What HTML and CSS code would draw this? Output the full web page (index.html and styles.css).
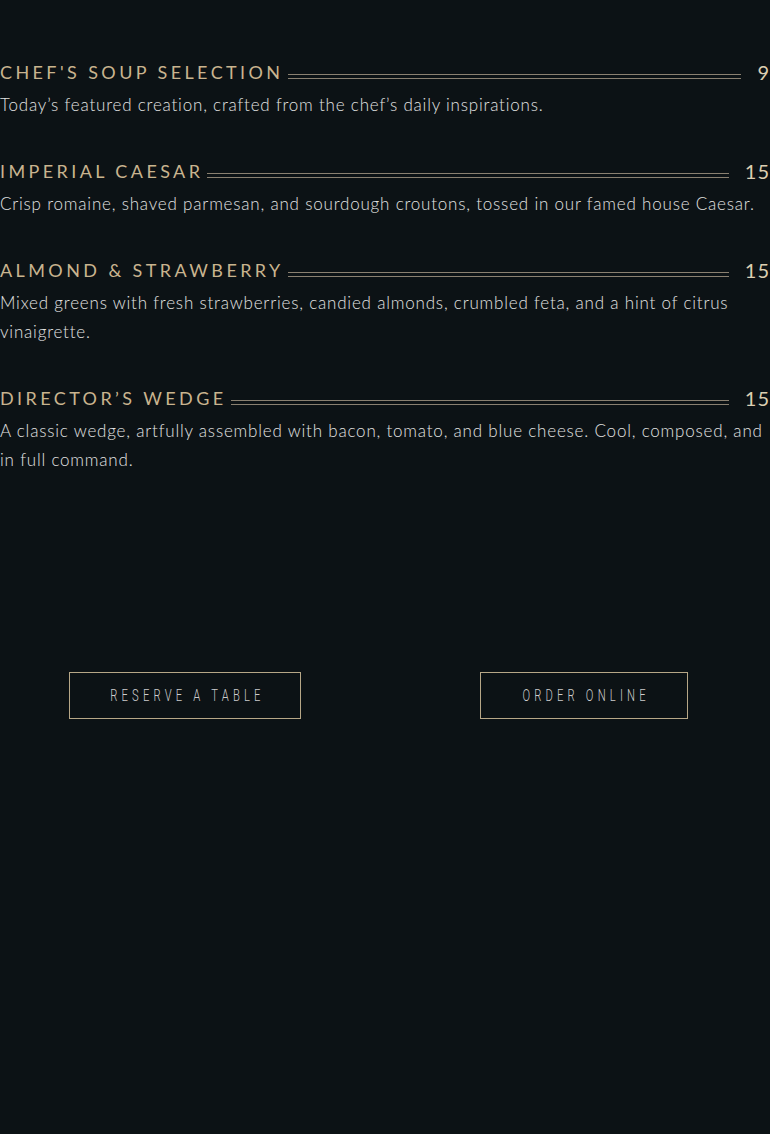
FILE: index.html
```html
<!DOCTYPE html>
<html lang="en">
<head>
<meta charset="utf-8">
<title>Menu</title>
<link rel="stylesheet" href="styles.css">
</head>
<body>
<main class="menu">
  <section class="item">
    <div class="item-head"><h3 class="item-name">Chef's Soup Selection</h3><span class="rule"></span><span class="price">9</span></div>
    <p class="item-desc">Today’s featured creation, crafted from the chef’s daily inspirations.</p>
  </section>
  <section class="item">
    <div class="item-head"><h3 class="item-name">Imperial Caesar</h3><span class="rule"></span><span class="price">15</span></div>
    <p class="item-desc">Crisp romaine, shaved parmesan, and sourdough croutons, tossed in our famed house Caesar.</p>
  </section>
  <section class="item">
    <div class="item-head"><h3 class="item-name">Almond &amp; Strawberry</h3><span class="rule"></span><span class="price">15</span></div>
    <p class="item-desc">Mixed greens with fresh strawberries, candied almonds, crumbled feta, and a hint of citrus vinaigrette.</p>
  </section>
  <section class="item">
    <div class="item-head"><h3 class="item-name">Director’s Wedge</h3><span class="rule"></span><span class="price">15</span></div>
    <p class="item-desc">A classic wedge, artfully assembled with bacon, tomato, and blue cheese. Cool, composed, and in full command.</p>
  </section>
</main>
<div class="actions">
  <a class="btn btn-reserve" href="#"><span class="btn-label">Reserve a Table</span></a>
  <a class="btn btn-order" href="#"><span class="btn-label">Order Online</span></a>
</div>
</body>
</html>
```
FILE: styles.css
```css
html, body {
  margin: 0;
  padding: 0;
  background: #0c1215;
}
body {
  width: 770px;
  min-height: 1134px;
  font-family: "Lato", "Liberation Sans", sans-serif;
}
.menu {
  padding-top: 60px;
  display: flex;
  flex-direction: column;
  gap: 40px;
}
.item {
  display: flex;
  flex-direction: column;
  gap: 6px;
}
.item-head {
  display: flex;
  align-items: center;
  height: 24px;
}
.item-name {
  margin: 0;
  font-size: 18px;
  font-weight: 400;
  line-height: 24px;
  text-transform: uppercase;
  letter-spacing: 3.4px;
  color: #c9b48f;
  white-space: nowrap;
}
.rule {
  flex: 1;
  height: 3px;
  border-top: 1px solid #8a8070;
  border-bottom: 1px solid #8a8070;
  margin: 9px 16px 0 4px;
}
.price {
  font-size: 20px;
  line-height: 24px;
  letter-spacing: 1px;
  color: #dccfb2;
}
.item-desc {
  margin: 0;
  font-size: 17px;
  font-weight: 300;
  line-height: 29px;
  color: #e2e2e2;
  letter-spacing: 0.8px;
}
.actions {
  margin-top: 198px;
  display: flex;
  gap: 179px;
  padding-left: 69px;
}
.btn {
  display: flex;
  align-items: center;
  justify-content: center;
  box-sizing: border-box;
  height: 47px;
  border: 1px solid #b7a787;
  color: #cdcdcd;
  text-decoration: none;
  text-transform: uppercase;
  font-family: "Roboto", "Liberation Sans", sans-serif;
  font-weight: 300;
  font-size: 16px;
}
.btn-label {
  display: inline-block;
  padding-left: 6px;
  letter-spacing: 6px;
  transform: scaleX(0.7);
  white-space: nowrap;
}
.btn-reserve { width: 232px; }
.btn-order { width: 208px; }
```
